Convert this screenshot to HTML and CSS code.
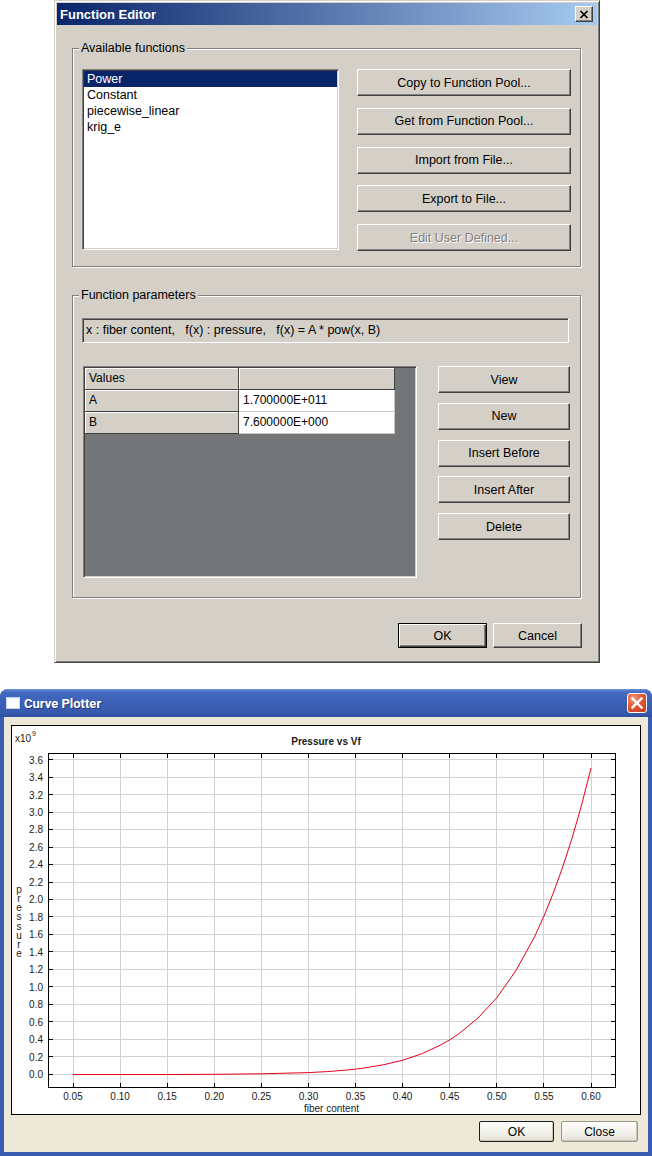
FILE: index.html
```html
<!DOCTYPE html>
<html>
<head>
<meta charset="utf-8">
<title>Function Editor</title>
<link rel="stylesheet" href="styles.css">
</head>
<body>
<div class="win">
  <div class="titlebar">
    <span class="title">Function Editor</span>
    <div class="tclose"><svg width="10" height="9" viewBox="0 0 10 9"><path d="M1.5 1L8.5 8M8.5 1L1.5 8" stroke="#000" stroke-width="1.7" fill="none"/></svg></div>
  </div>
  <div class="winbody">
    <div class="group g1">
      <div class="legend">Available functions</div>
      <div class="row1">
        <div class="listbox sunken">
          <div class="item sel">Power</div>
          <div class="item">Constant</div>
          <div class="item">piecewise_linear</div>
          <div class="item">krig_e</div>
        </div>
        <div class="btncol">
          <div class="btn">Copy to Function Pool...</div>
          <div class="btn">Get from Function Pool...</div>
          <div class="btn">Import from File...</div>
          <div class="btn">Export to File...</div>
          <div class="btn disabled">Edit User Defined...</div>
        </div>
      </div>
    </div>
    <div class="group g2">
      <div class="legend">Function parameters</div>
      <div class="field sunken">x : fiber content,   f(x) : pressure,   f(x) = A * pow(x, B)</div>
      <div class="row2">
        <div class="grid sunken">
          <div class="gt">
            <div class="hc">Values</div><div class="hc"></div>
            <div class="hc">A</div><div class="vc">1.700000E+011</div>
            <div class="hc">B</div><div class="vc">7.600000E+000</div>
          </div>
        </div>
        <div class="btncol2">
          <div class="btn">View</div>
          <div class="btn">New</div>
          <div class="btn">Insert Before</div>
          <div class="btn">Insert After</div>
          <div class="btn">Delete</div>
        </div>
      </div>
    </div>
    <div class="dlgbtns">
      <div class="btn default">OK</div>
      <div class="btn">Cancel</div>
    </div>
  </div>
</div>

<div class="xpwin">
  <div class="xptitle">
    <svg class="xpicon" width="14" height="12" viewBox="0 0 14 12"><rect x="0.5" y="0.5" width="13" height="11" fill="#fff" stroke="#c9d6f2"/><rect x="1" y="1" width="12" height="1" fill="#e4ebf9"/></svg>
    <span class="xptext">Curve Plotter</span>
    <div class="xpclose"><svg width="12" height="12" viewBox="0 0 12 12"><path d="M1.5 1.5L10.5 10.5M10.5 1.5L1.5 10.5" stroke="#fff" stroke-width="2.4" stroke-linecap="square" fill="none"/></svg></div>
  </div>
  <div class="xpbody">
    <div class="panel">
      <svg class="chart" width="628" height="388" viewBox="12 726 628 388">
        <path class="gridl" d="M73.5 754V1088M120.5 754V1088M167.5 754V1088M214.5 754V1088M261.5 754V1088M308.5 754V1088M355.5 754V1088M402.5 754V1088M449.5 754V1088M496.5 754V1088M543.5 754V1088M591.5 754V1088"/>
        <path class="gridl" d="M49 1074.5H615M49 1056.5H615M49 1039.5H615M49 1021.5H615M49 1004.5H615M49 986.5H615M49 969.5H615M49 951.5H615M49 934.5H615M49 916.5H615M49 899.5H615M49 882.5H615M49 864.5H615M49 847.5H615M49 829.5H615M49 812.5H615M49 794.5H615M49 777.5H615M49 759.5H615"/>
        <path class="ticks" d="M49 1074.5H53M49 1056.5H53M49 1039.5H53M49 1021.5H53M49 1004.5H53M49 986.5H53M49 969.5H53M49 951.5H53M49 934.5H53M49 916.5H53M49 899.5H53M49 882.5H53M49 864.5H53M49 847.5H53M49 829.5H53M49 812.5H53M49 794.5H53M49 777.5H53M49 759.5H53
        M611 1074.5H615M611 1056.5H615M611 1039.5H615M611 1021.5H615M611 1004.5H615M611 986.5H615M611 969.5H615M611 951.5H615M611 934.5H615M611 916.5H615M611 899.5H615M611 882.5H615M611 864.5H615M611 847.5H615M611 829.5H615M611 812.5H615M611 794.5H615M611 777.5H615M611 759.5H615
        M73.5 754V758M120.5 754V758M167.5 754V758M214.5 754V758M261.5 754V758M308.5 754V758M355.5 754V758M402.5 754V758M449.5 754V758M496.5 754V758M543.5 754V758M591.5 754V758
        M73.5 1083V1087M120.5 1083V1087M167.5 1083V1087M214.5 1083V1087M261.5 1083V1087M308.5 1083V1087M355.5 1083V1087M402.5 1083V1087M449.5 1083V1087M496.5 1083V1087M543.5 1083V1087M591.5 1083V1087"/>
        <rect class="frame" x="48.5" y="753.5" width="567" height="334"/>
        <polyline class="curve" points="73,1074.5 120.1,1074.5 167.2,1074.5 214.3,1074.3 261.4,1073.8 308.5,1072.6 327.3,1071.6 346.1,1070.1 355.5,1069.1 365,1067.9 383.8,1064.7 402.6,1060.2 421.5,1053.9 440.3,1045.2 449.7,1039.8 459.1,1033.6 478,1018 496.8,997.7 515.6,971.1 534.5,936.9 543.9,916.2 553.3,893 562.7,867 572.2,837.7 581.6,805 591,768.1"/>
        <g class="ylab">
          <text x="43" y="1078">0.0</text>
          <text x="43" y="1060.5">0.2</text>
          <text x="43" y="1043">0.4</text>
          <text x="43" y="1025.5">0.6</text>
          <text x="43" y="1008">0.8</text>
          <text x="43" y="990.5">1.0</text>
          <text x="43" y="973">1.2</text>
          <text x="43" y="955.5">1.4</text>
          <text x="43" y="938">1.6</text>
          <text x="43" y="920.5">1.8</text>
          <text x="43" y="903">2.0</text>
          <text x="43" y="885.5">2.2</text>
          <text x="43" y="868">2.4</text>
          <text x="43" y="850.5">2.6</text>
          <text x="43" y="833">2.8</text>
          <text x="43" y="815.5">3.0</text>
          <text x="43" y="798.5">3.2</text>
          <text x="43" y="781">3.4</text>
          <text x="43" y="763.5">3.6</text>
        </g>
        <g class="xlab">
          <text x="73" y="1100">0.05</text>
          <text x="120.1" y="1100">0.10</text>
          <text x="167.2" y="1100">0.15</text>
          <text x="214.3" y="1100">0.20</text>
          <text x="261.4" y="1100">0.25</text>
          <text x="308.5" y="1100">0.30</text>
          <text x="355.5" y="1100">0.35</text>
          <text x="402.6" y="1100">0.40</text>
          <text x="449.7" y="1100">0.45</text>
          <text x="496.8" y="1100">0.50</text>
          <text x="543.9" y="1100">0.55</text>
          <text x="591" y="1100">0.60</text>
          <text x="331.5" y="1112">fiber content</text>
        </g>
        <g class="vlab">
          <text x="19" y="893">p</text>
          <text x="19" y="902.1">r</text>
          <text x="19" y="911.3">e</text>
          <text x="19" y="920.4">s</text>
          <text x="19" y="929.6">s</text>
          <text x="19" y="938.7">u</text>
          <text x="19" y="947.9">r</text>
          <text x="19" y="957">e</text>
        </g>
        <text class="ctitle" x="326" y="745">Pressure vs Vf</text>
        <text class="exp" x="15" y="742">x10</text>
        <text class="sup" x="32" y="736">9</text>
      </svg>
    </div>
    <div class="xbtns">
      <div class="xbtn def">OK</div>
      <div class="xbtn wide">Close</div>
    </div>
  </div>
</div>
</body>
</html>
```
FILE: styles.css
```css
* { box-sizing: border-box; }
body {
  margin: 0;
  background: #fff;
  font-family: "Liberation Sans", Arial, sans-serif;
  font-size: 12.5px;
  color: #000;
}

/* ---------- classic dialog ---------- */
.win {
  margin-left: 54px;
  width: 546px;
  background: #d4d0c8;
  border: 1px solid;
  border-color: #d4d0c8 #404040 #404040 #d4d0c8;
  box-shadow: inset 1px 1px #fff, inset -1px -1px #808080;
  padding: 2px;
}
.titlebar {
  height: 22px;
  background: linear-gradient(to right, #0a246a, #a6caf0);
  display: flex;
  align-items: center;
  justify-content: space-between;
  padding: 0 4px 0 3px;
}
.title {
  color: #fff;
  font-weight: bold;
  font-size: 13px;
}
.tclose {
  width: 18px;
  height: 16px;
  background: #d4d0c8;
  border: 1px solid;
  border-color: #fff #404040 #404040 #fff;
  box-shadow: inset -1px -1px #808080;
  display: flex;
  align-items: center;
  justify-content: center;
}
.tclose svg { display: block; }

.winbody { padding: 23px 15px 12px 15px; }

.group {
  border: 1px solid #808080;
  box-shadow: inset 1px 1px #fff, 1px 1px #fff;
  margin-right: 1px;
}
.legend {
  width: fit-content;
  margin: -8px 0 0 -3px;
  padding: 0 2px;
  height: 15px;
  line-height: 15px;
  background: #d4d0c8;
}
.g1 { padding: 0 9px 15px 9px; }
.row1 {
  display: flex;
  justify-content: space-between;
  margin-top: 13px;
}
.sunken {
  border: 1px solid;
  border-color: #808080 #fff #fff #808080;
  box-shadow: inset 1px 1px #404040, inset -1px -1px #d4d0c8;
  padding: 1px;
}
.listbox {
  width: 257px;
  height: 181px;
  background: #fff;
}
.item {
  height: 16px;
  line-height: 16px;
  padding-left: 3px;
}
.item.sel { background: #0a246a; color: #fff; }

.btncol {
  width: 214px;
  display: flex;
  flex-direction: column;
  gap: 11.75px;
}
.btn {
  height: 27px;
  background: #d4d0c8;
  border: 1px solid;
  border-color: #fff #404040 #404040 #fff;
  box-shadow: inset -1px -1px #808080;
  display: flex;
  align-items: center;
  justify-content: center;
  white-space: nowrap;
}
.btn.disabled { color: #808080; text-shadow: 1px 1px 0 #fff; }

.g2 { margin-top: 28px; padding: 0 10px 19px 9px; }
.field {
  margin-top: 15px;
  width: 487px;
  height: 25px;
  padding: 1px 1px 1px 3px;
  line-height: 21px;
  white-space: pre;
  background: #d4d0c8;
}
.row2 {
  display: flex;
  gap: 21px;
  margin-top: 23px;
  margin-left: 1px;
}
.grid {
  width: 334px;
  height: 212px;
  background: #747577;
}
.gt {
  display: grid;
  grid-template-columns: 154px 156px;
  grid-auto-rows: 22px;
  font-size: 12px;
}
.hc {
  background: #d4d0c8;
  border-right: 1px solid #404040;
  border-bottom: 1px solid #404040;
  box-shadow: inset 1px 1px #fff;
  padding-left: 4px;
  line-height: 21px;
}
.vc {
  background: #fff;
  border-right: 1px solid #c8c8c8;
  border-bottom: 1px solid #c8c8c8;
  padding-left: 4px;
  line-height: 21px;
}
.btncol2 {
  width: 132px;
  display: flex;
  flex-direction: column;
  gap: 9.75px;
}
.dlgbtns {
  display: flex;
  justify-content: flex-end;
  gap: 6px;
  margin-top: 25px;
}
.dlgbtns .btn { width: 89px; height: 25px; }
.btn.default {
  border: 1px solid #000;
  box-shadow: inset 1px 1px #fff, inset -1px -1px #404040, inset -2px -2px #808080;
}

/* ---------- XP plotter window ---------- */
.xpwin {
  margin-top: 26px;
  width: 652px;
  height: 467px;
  background: #3a5cb0;
  border-radius: 8px 8px 0 0;
  display: flex;
  flex-direction: column;
}
.xptitle {
  height: 28px;
  flex: none;
  border-radius: 8px 8px 0 0;
  background: linear-gradient(to bottom, #6d8fd8 0%, #4369c0 12%, #3b60b5 50%, #3759ac 88%, #2f4f9e 100%);
  display: flex;
  align-items: center;
  padding: 0 5px 0 6px;
}
.xpicon { display: block; flex: none; }
.xptext {
  margin-left: 4px;
  flex: 1;
  color: #fff;
  font-family: Roboto, "Liberation Sans", sans-serif;
  font-weight: bold;
  font-size: 13px;
  text-shadow: 1px 1px 0 #22397a;
}
.xpclose {
  width: 20px;
  height: 20px;
  border: 1px solid #fff;
  border-radius: 3px;
  background: radial-gradient(circle at 30% 25%, #f09a80 0%, #e05a36 45%, #c7391a 100%);
  display: flex;
  align-items: center;
  justify-content: center;
}
.xpclose svg { display: block; }
.xpbody {
  flex: 1;
  margin: 0 4px 4px;
  background: #ece9d8;
  padding: 8px 7px 10px 7px;
  display: flex;
  flex-direction: column;
}
.panel {
  height: 390px;
  border: 1px solid #000;
  background: #fff;
}
.chart { display: block; }
.gridl { stroke: #d2d2d2; stroke-width: 1; fill: none; }
.ticks { stroke: #000; stroke-width: 1; fill: none; }
.frame { stroke: #000; stroke-width: 1; fill: none; }
.curve { stroke: #e8001c; stroke-width: 1; fill: none; }
.chart text {
  font-family: "Liberation Sans", Arial, sans-serif;
  font-size: 10px;
  fill: #1a1a1a;
}
.ylab text { text-anchor: end; }
.xlab text { text-anchor: middle; }
.vlab text { text-anchor: middle; }
.chart .ctitle { text-anchor: middle; font-weight: bold; }
.chart .sup { font-size: 7px; }

.xbtns {
  display: flex;
  justify-content: flex-end;
  gap: 7px;
  margin-top: 6px;
  padding-right: 3px;
}
.xbtn {
  width: 75px;
  height: 21px;
  border: 1px solid #9a988e;
  border-radius: 2px;
  background: linear-gradient(to bottom, #fdfdfb 0%, #f3f2ec 55%, #e2e0d4 100%);
  box-shadow: inset -1px -1px #c9c6b8;
  display: flex;
  align-items: center;
  justify-content: center;
  font-size: 12px;
}
.xbtn.def { border-color: #1e1e1e; }
.xbtn.wide { width: 77px; }
```
